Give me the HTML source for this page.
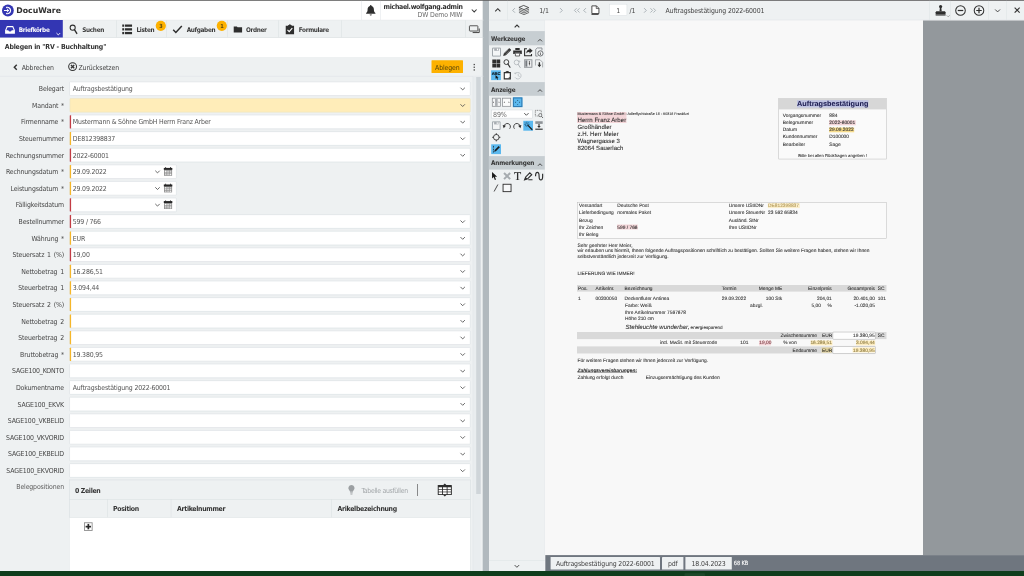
<!DOCTYPE html>
<html lang="de"><head><meta charset="utf-8"><title>DocuWare - Ablegen in "RV - Buchhaltung"</title>
<style>
html,body{margin:0;padding:0;background:#fff;}
body{width:1024px;height:576px;overflow:hidden;position:relative;}
#app{position:absolute;left:0;top:0;width:10240px;height:5760px;transform:scale(0.1);transform-origin:0 0;font-family:'DejaVu Sans Condensed','Liberation Sans',sans-serif;overflow:hidden;text-rendering:geometricPrecision;will-change:transform;}
#app div,#app span,#app svg,#app label,#app h1,#app b,#app i,#app u{position:absolute;box-sizing:border-box;margin:0;padding:0;}
#app .t{white-space:nowrap;letter-spacing:-1.6px;font-style:normal;font-weight:400;text-decoration:none}
#app svg{overflow:visible}
</style></head>
<body><div id="app">
<div style="left:0px;top:0px;width:10240px;height:5760px;background:#fff;"></div>
<div style="left:0px;top:200px;width:4835px;height:175px;background:#eef1f2;"></div>
<div style="left:0px;top:570px;width:4835px;height:5140px;background:#eef1f2;"></div>
<div style="left:4887.5px;top:0px;width:5352.5px;height:200px;background:#eef1f2;"></div>
<div style="left:4887.5px;top:200px;width:560px;height:5510px;background:#eef1f2;"></div>
<div style="left:5447.5px;top:203px;width:3782.5px;height:5349px;background:#f8f8f8;"></div>
<div style="left:9230px;top:203px;width:1010px;height:5349px;background:#93989c;"></div>
<div style="left:5452.5px;top:5551px;width:4787.5px;height:159px;background:#6f767f;"></div>
<div style="left:4827px;top:0px;width:63px;height:5710px;background:#b1b9be;"></div>
<div style="left:0px;top:0px;width:10240px;height:8px;background:#5e5e5e;"></div>
<div style="left:0px;top:5710px;width:10240px;height:50px;background:#0f3d1c;"></div>
<svg style="left:20px;top:46px;width:118px;height:118px;" viewBox="0 0 24 24"><circle cx="12" cy="12" r="12" fill="#3336b3"/><path d="M9.2 5.6 A6.6 6.6 0 1 1 9.2 18.4" fill="none" stroke="#fff" stroke-width="2.3" stroke-linecap="round"/><path d="M4.8 12 H13.2 M10.4 8.9 L13.6 12 L10.4 15.1" fill="none" stroke="#fff" stroke-width="2" stroke-linecap="round" stroke-linejoin="round"/></svg>
<span class="t" style="top:67px;font-size:78px;line-height:78px;color:#2f2f2f;font-weight:700;font-family:'DejaVu Sans','Liberation Sans',sans-serif;letter-spacing:0px;left:162px;">DocuWare</span>
<div style="left:3615px;top:8px;width:5px;height:192px;background:#dfe3e6;"></div>
<div style="left:3802.5px;top:8px;width:5px;height:192px;background:#dfe3e6;"></div>
<svg style="left:3655px;top:43px;width:105px;height:120px;" viewBox="0 0 21 24"><path d="M10.5 1.2c-.9 0-1.6.7-1.6 1.6v.7C5.9 4.4 4.2 7 4.2 10.2c0 4.3-1.3 5.9-3 7.4v1.2h18.6v-1.2c-1.7-1.5-3-3.1-3-7.4 0-3.2-1.7-5.8-4.7-6.7v-.7c0-.9-.7-1.6-1.6-1.6z" fill="#2e2e2e"/><path d="M8.3 20.2a2.2 2.2 0 0 0 4.4 0z" fill="#2e2e2e"/></svg>
<span class="t" style="top:31.4px;font-size:69.3px;line-height:69.3px;color:#2f2f2f;font-weight:700;letter-spacing:-3.3px;right:5614px;">michael.wolfgang.admin</span>
<span class="t" style="top:111.4px;font-size:69.3px;line-height:69.3px;color:#6a6a6a;right:5614px;">DW Demo MIW</span>
<svg style="left:4712px;top:90px;width:60px;height:34px;" viewBox="0 0 12 7"><path d="M1 1 L6 6 L11 1" fill="none" stroke="#3a3a3a" stroke-width="2.1"/></svg>
<div style="left:0px;top:198px;width:4835px;height:5px;background:#e3e7e9;"></div>
<div style="left:0px;top:373px;width:4835px;height:5px;background:#d3d8db;"></div>
<div style="left:0px;top:200px;width:628px;height:175px;background:#3336b3;"></div>
<svg style="left:48px;top:256px;width:104px;height:86px;" viewBox="0 0 21 17"><path d="M4.2 0.8 H16.8 L20.4 9.2 V16.2 H0.6 V9.2 Z" fill="#fff"/><path d="M5.5 2.9 H15.5 L18 9.2 H14 A3.6 3.6 0 0 1 7 9.2 H3 Z" fill="#3336b3"/></svg>
<span class="t" style="top:267.9px;font-size:64px;line-height:64px;color:#fff;font-weight:700;letter-spacing:-3.3px;left:187px;">Briefkörbe</span>
<svg style="left:560px;top:326px;width:46px;height:28px;" viewBox="0 0 10 6"><path d="M1 1 L5 5 L9 1" fill="none" stroke="#fff" stroke-width="2"/></svg>
<div style="left:1165px;top:203px;width:5px;height:170px;background:#d9dee1;"></div>
<div style="left:1662.5px;top:203px;width:5px;height:170px;background:#d9dee1;"></div>
<div style="left:2272.5px;top:203px;width:5px;height:170px;background:#d9dee1;"></div>
<div style="left:2782.5px;top:203px;width:5px;height:170px;background:#d9dee1;"></div>
<div style="left:3412.5px;top:203px;width:5px;height:170px;background:#d9dee1;"></div>
<div style="left:4652.5px;top:203px;width:5px;height:170px;background:#d9dee1;"></div>
<svg style="left:693px;top:242px;width:82px;height:102px;" viewBox="0 0 16 20"><circle cx="6.6" cy="6.8" r="5" fill="none" stroke="#2e2e2e" stroke-width="2"/><path d="M10 10.8 L14.6 18.2" stroke="#2e2e2e" stroke-width="2.7" stroke-linecap="round"/></svg>
<span class="t" style="top:267.9px;font-size:64px;line-height:64px;color:#3a3a3a;font-weight:700;letter-spacing:-3.3px;left:822px;">Suchen</span>
<svg style="left:1222px;top:245px;width:99px;height:98px;" viewBox="0 0 20 20"><g fill="#2e2e2e"><rect x="0" y="0" width="4" height="4.6"/><rect x="5.6" y="0" width="14.4" height="4.6"/><rect x="0" y="7.6" width="4" height="4.6"/><rect x="5.6" y="7.6" width="14.4" height="4.6"/><rect x="0" y="15.2" width="4" height="4.6"/><rect x="5.6" y="15.2" width="14.4" height="4.6"/></g></svg>
<span class="t" style="top:267.9px;font-size:64px;line-height:64px;color:#3a3a3a;font-weight:700;letter-spacing:-3.3px;left:1364px;">Listen</span>
<div style="left:1557px;top:207px;width:102px;height:102px;background:#fdb100;border-radius:50%"></div>
<span class="t" style="top:232.6px;font-size:56px;line-height:56px;color:#5e4a0c;font-weight:700;left:608px;width:2000px;text-align:center;">3</span>
<svg style="left:1726px;top:252px;width:98px;height:84px;" viewBox="0 0 20 17"><path d="M1.2 9.4 L6.6 14.8 L18.8 1.4" fill="none" stroke="#2e2e2e" stroke-width="3"/></svg>
<span class="t" style="top:267.9px;font-size:64px;line-height:64px;color:#3a3a3a;font-weight:700;letter-spacing:-3.3px;left:1867px;">Aufgaben</span>
<div style="left:2167px;top:207px;width:102px;height:102px;background:#fdb100;border-radius:50%"></div>
<span class="t" style="top:232.6px;font-size:56px;line-height:56px;color:#5e4a0c;font-weight:700;left:1218px;width:2000px;text-align:center;">1</span>
<svg style="left:2337px;top:260px;width:84px;height:64px;" viewBox="0 0 17 13"><path d="M0 1 H6.4 L7.8 2.6 H17 V13 H0 Z" fill="#2e2e2e"/></svg>
<span class="t" style="top:267.9px;font-size:64px;line-height:64px;color:#3a3a3a;font-weight:700;letter-spacing:-3.3px;left:2459px;">Ordner</span>
<svg style="left:2857px;top:244px;width:84px;height:98px;" viewBox="0 0 17 20"><path d="M0 2.6 H5 V1 H6.6 A2 2 0 0 1 10.4 1 H12 V2.6 H17 V20 H0 Z" fill="#2e2e2e"/><path d="M3.6 11.4 L7 14.8 L13.4 7.4" fill="none" stroke="#fff" stroke-width="2.2"/></svg>
<span class="t" style="top:267.9px;font-size:64px;line-height:64px;color:#3a3a3a;font-weight:700;letter-spacing:-3.3px;left:2987px;">Formulare</span>
<svg style="left:4690px;top:253px;width:114px;height:80px;" viewBox="0 0 23 16"><rect x="0.9" y="0.9" width="17" height="10.6" rx="1" fill="none" stroke="#444" stroke-width="1.8"/><path d="M20.6 6.4 V14.6 H7.4" fill="none" stroke="#444" stroke-width="2"/></svg>
<h1 class="t" style="left:48px;top:437.4px;font-size:69.3px;line-height:69.3px;color:#333;font-weight:700;letter-spacing:-2px">Ablegen in "RV - Buchhaltung"</h1>
<div style="left:0px;top:759px;width:4835px;height:5px;background:#dde2e5;"></div>
<svg style="left:135px;top:642px;width:38px;height:60px;" viewBox="0 0 7 11"><path d="M6 1 L1.5 5.5 L6 10" fill="none" stroke="#333" stroke-width="2.6"/></svg>
<span class="t" style="top:639.4px;font-size:69.3px;line-height:69.3px;color:#444;left:217px;">Abbrechen</span>
<svg style="left:680px;top:620px;width:92px;height:92px;" viewBox="0 0 18 18"><circle cx="9" cy="9" r="7.7" fill="none" stroke="#333" stroke-width="2"/><path d="M5.8 5.8 L12.2 12.2 M12.2 5.8 L5.8 12.2" stroke="#333" stroke-width="2.6"/></svg>
<span class="t" style="top:639.4px;font-size:69.3px;line-height:69.3px;color:#444;left:785px;">Zurücksetzen</span>
<div style="left:4315px;top:602.5px;width:315px;height:127.5px;background:#fdb100;border-radius:5px"></div>
<span class="t" style="top:639.4px;font-size:69.3px;line-height:69.3px;color:#5a4608;left:3472.5px;width:2000px;text-align:center;">Ablegen</span>
<div style="left:4736px;top:639px;width:13px;height:13px;background:#444;"></div>
<div style="left:4736px;top:666px;width:13px;height:13px;background:#444;"></div>
<div style="left:4736px;top:693px;width:13px;height:13px;background:#444;"></div>
<label class="t" style="right:9600px;top:855.4px;font-size:69.3px;line-height:69.3px;color:#454545;word-spacing:10px">Belegart</label>
<div style="left:693px;top:815.5px;width:4012px;height:142px;background:#fff;border:5.5px solid #d5dbdf;border-radius:9px"></div>
<span class="t" style="top:855.4px;font-size:69.3px;line-height:69.3px;color:#555;letter-spacing:-2px;left:728px;">Auftragsbestätigung</span>
<svg style="left:4600px;top:871.5px;width:54px;height:32px;" viewBox="0 0 11 6.5"><path d="M1 1 L5.5 5.5 L10 1" fill="none" stroke="#4c4c4c" stroke-width="1.7"/></svg>
<label class="t" style="right:9600px;top:1021.4px;font-size:69.3px;line-height:69.3px;color:#454545;word-spacing:10px">Mandant *</label>
<div style="left:697px;top:981.5px;width:4008px;height:142px;background:#ffedb9;border:5.5px solid #e9e0c0;border-radius:9px"></div>
<svg style="left:4600px;top:1037.5px;width:54px;height:32px;" viewBox="0 0 11 6.5"><path d="M1 1 L5.5 5.5 L10 1" fill="none" stroke="#4c4c4c" stroke-width="1.7"/></svg>
<label class="t" style="right:9600px;top:1187.4px;font-size:69.3px;line-height:69.3px;color:#454545;word-spacing:10px">Firmenname *</label>
<div style="left:697px;top:1147.5px;width:4008px;height:142px;background:#fff;border:5.5px solid #d5dbdf;border-radius:9px"></div>
<div style="left:698px;top:1152.5px;width:12.5px;height:132px;background:#c33c44;border-radius:5px 0 0 5px"></div>
<span class="t" style="top:1187.4px;font-size:69.3px;line-height:69.3px;color:#555;letter-spacing:-2px;left:728px;">Mustermann &amp; Söhne GmbH Herrn Franz Arber</span>
<svg style="left:4600px;top:1203.5px;width:54px;height:32px;" viewBox="0 0 11 6.5"><path d="M1 1 L5.5 5.5 L10 1" fill="none" stroke="#4c4c4c" stroke-width="1.7"/></svg>
<label class="t" style="right:9600px;top:1353.4px;font-size:69.3px;line-height:69.3px;color:#454545;word-spacing:10px">Steuernummer</label>
<div style="left:697px;top:1313.5px;width:4008px;height:142px;background:#fff;border:5.5px solid #d5dbdf;border-radius:9px"></div>
<div style="left:698px;top:1318.5px;width:12.5px;height:132px;background:#f5b62a;border-radius:5px 0 0 5px"></div>
<span class="t" style="top:1353.4px;font-size:69.3px;line-height:69.3px;color:#555;letter-spacing:-2px;left:728px;">DE812398837</span>
<svg style="left:4600px;top:1369.5px;width:54px;height:32px;" viewBox="0 0 11 6.5"><path d="M1 1 L5.5 5.5 L10 1" fill="none" stroke="#4c4c4c" stroke-width="1.7"/></svg>
<label class="t" style="right:9600px;top:1519.4px;font-size:69.3px;line-height:69.3px;color:#454545;word-spacing:10px">Rechnungsnummer</label>
<div style="left:697px;top:1479.5px;width:4008px;height:142px;background:#fff;border:5.5px solid #d5dbdf;border-radius:9px"></div>
<div style="left:698px;top:1484.5px;width:12.5px;height:132px;background:#c33c44;border-radius:5px 0 0 5px"></div>
<span class="t" style="top:1519.4px;font-size:69.3px;line-height:69.3px;color:#555;letter-spacing:-2px;left:728px;">2022-60001</span>
<svg style="left:4600px;top:1535.5px;width:54px;height:32px;" viewBox="0 0 11 6.5"><path d="M1 1 L5.5 5.5 L10 1" fill="none" stroke="#4c4c4c" stroke-width="1.7"/></svg>
<label class="t" style="right:9600px;top:1685.4px;font-size:69.3px;line-height:69.3px;color:#454545;word-spacing:10px">Rechnungsdatum *</label>
<div style="left:697px;top:1645.5px;width:1069px;height:142px;background:#fff;border:5.5px solid #d5dbdf;border-radius:9px"></div>
<div style="left:698px;top:1650.5px;width:12.5px;height:132px;background:#f5b62a;border-radius:5px 0 0 5px"></div>
<span class="t" style="top:1685.4px;font-size:69.3px;line-height:69.3px;color:#555;letter-spacing:-2px;left:728px;">29.09.2022</span>
<svg style="left:1548px;top:1701.5px;width:54px;height:32px;" viewBox="0 0 11 6.5"><path d="M1 1 L5.5 5.5 L10 1" fill="none" stroke="#4c4c4c" stroke-width="1.7"/></svg>
<svg style="left:1638px;top:1671.5px;width:85px;height:88px;" viewBox="0 0 17 17.6"><path d="M0.4 2 H16.6 V17.2 H0.4 Z" fill="#8c8c8c"/><path d="M0 1.4 H17 V5.2 H0 Z" fill="#262626"/><path d="M2.6 0 H4.6 V2 H2.6 Z M12.4 0 H14.4 V2 H12.4 Z" fill="#262626"/><g fill="#dcdcdc"><rect x="2" y="6.8" width="3.4" height="2.6" fill="#fff"/><rect x="6.8" y="6.8" width="3.4" height="2.6"/><rect x="11.6" y="6.8" width="3.4" height="2.6"/><rect x="2" y="10.4" width="3.4" height="2.4"/><rect x="6.8" y="10.4" width="3.4" height="2.4"/><rect x="11.6" y="10.4" width="3.4" height="2.4"/><rect x="2" y="13.8" width="3.4" height="2.2"/><rect x="6.8" y="13.8" width="3.4" height="2.2"/><rect x="11.6" y="13.8" width="3.4" height="2.2" fill="#fff"/></g></svg>
<label class="t" style="right:9600px;top:1851.4px;font-size:69.3px;line-height:69.3px;color:#454545;word-spacing:10px">Leistungsdatum *</label>
<div style="left:697px;top:1811.5px;width:1069px;height:142px;background:#fff;border:5.5px solid #d5dbdf;border-radius:9px"></div>
<div style="left:698px;top:1816.5px;width:12.5px;height:132px;background:#f5b62a;border-radius:5px 0 0 5px"></div>
<span class="t" style="top:1851.4px;font-size:69.3px;line-height:69.3px;color:#555;letter-spacing:-2px;left:728px;">29.09.2022</span>
<svg style="left:1548px;top:1867.5px;width:54px;height:32px;" viewBox="0 0 11 6.5"><path d="M1 1 L5.5 5.5 L10 1" fill="none" stroke="#4c4c4c" stroke-width="1.7"/></svg>
<svg style="left:1638px;top:1837.5px;width:85px;height:88px;" viewBox="0 0 17 17.6"><path d="M0.4 2 H16.6 V17.2 H0.4 Z" fill="#8c8c8c"/><path d="M0 1.4 H17 V5.2 H0 Z" fill="#262626"/><path d="M2.6 0 H4.6 V2 H2.6 Z M12.4 0 H14.4 V2 H12.4 Z" fill="#262626"/><g fill="#dcdcdc"><rect x="2" y="6.8" width="3.4" height="2.6" fill="#fff"/><rect x="6.8" y="6.8" width="3.4" height="2.6"/><rect x="11.6" y="6.8" width="3.4" height="2.6"/><rect x="2" y="10.4" width="3.4" height="2.4"/><rect x="6.8" y="10.4" width="3.4" height="2.4"/><rect x="11.6" y="10.4" width="3.4" height="2.4"/><rect x="2" y="13.8" width="3.4" height="2.2"/><rect x="6.8" y="13.8" width="3.4" height="2.2"/><rect x="11.6" y="13.8" width="3.4" height="2.2" fill="#fff"/></g></svg>
<label class="t" style="right:9600px;top:2017.4px;font-size:69.3px;line-height:69.3px;color:#454545;word-spacing:10px">Fälligkeitsdatum</label>
<div style="left:697px;top:1977.5px;width:1069px;height:142px;background:#fff;border:5.5px solid #d5dbdf;border-radius:9px"></div>
<div style="left:698px;top:1982.5px;width:12.5px;height:132px;background:#c33c44;border-radius:5px 0 0 5px"></div>
<svg style="left:1548px;top:2033.5px;width:54px;height:32px;" viewBox="0 0 11 6.5"><path d="M1 1 L5.5 5.5 L10 1" fill="none" stroke="#4c4c4c" stroke-width="1.7"/></svg>
<svg style="left:1638px;top:2003.5px;width:85px;height:88px;" viewBox="0 0 17 17.6"><path d="M0.4 2 H16.6 V17.2 H0.4 Z" fill="#8c8c8c"/><path d="M0 1.4 H17 V5.2 H0 Z" fill="#262626"/><path d="M2.6 0 H4.6 V2 H2.6 Z M12.4 0 H14.4 V2 H12.4 Z" fill="#262626"/><g fill="#dcdcdc"><rect x="2" y="6.8" width="3.4" height="2.6" fill="#fff"/><rect x="6.8" y="6.8" width="3.4" height="2.6"/><rect x="11.6" y="6.8" width="3.4" height="2.6"/><rect x="2" y="10.4" width="3.4" height="2.4"/><rect x="6.8" y="10.4" width="3.4" height="2.4"/><rect x="11.6" y="10.4" width="3.4" height="2.4"/><rect x="2" y="13.8" width="3.4" height="2.2"/><rect x="6.8" y="13.8" width="3.4" height="2.2"/><rect x="11.6" y="13.8" width="3.4" height="2.2" fill="#fff"/></g></svg>
<label class="t" style="right:9600px;top:2183.4px;font-size:69.3px;line-height:69.3px;color:#454545;word-spacing:10px">Bestellnummer</label>
<div style="left:697px;top:2143.5px;width:4008px;height:142px;background:#fff;border:5.5px solid #d5dbdf;border-radius:9px"></div>
<div style="left:698px;top:2148.5px;width:12.5px;height:132px;background:#c33c44;border-radius:5px 0 0 5px"></div>
<span class="t" style="top:2183.4px;font-size:69.3px;line-height:69.3px;color:#555;letter-spacing:-2px;left:728px;">599 / 766</span>
<svg style="left:4600px;top:2199.5px;width:54px;height:32px;" viewBox="0 0 11 6.5"><path d="M1 1 L5.5 5.5 L10 1" fill="none" stroke="#4c4c4c" stroke-width="1.7"/></svg>
<label class="t" style="right:9600px;top:2349.4px;font-size:69.3px;line-height:69.3px;color:#454545;word-spacing:10px">Währung *</label>
<div style="left:697px;top:2309.5px;width:4008px;height:142px;background:#fff;border:5.5px solid #d5dbdf;border-radius:9px"></div>
<div style="left:698px;top:2314.5px;width:12.5px;height:132px;background:#f5b62a;border-radius:5px 0 0 5px"></div>
<span class="t" style="top:2349.4px;font-size:69.3px;line-height:69.3px;color:#555;letter-spacing:-2px;left:728px;">EUR</span>
<svg style="left:4600px;top:2365.5px;width:54px;height:32px;" viewBox="0 0 11 6.5"><path d="M1 1 L5.5 5.5 L10 1" fill="none" stroke="#4c4c4c" stroke-width="1.7"/></svg>
<label class="t" style="right:9600px;top:2515.4px;font-size:69.3px;line-height:69.3px;color:#454545;word-spacing:10px">Steuersatz 1 (%)</label>
<div style="left:697px;top:2475.5px;width:4008px;height:142px;background:#fff;border:5.5px solid #d5dbdf;border-radius:9px"></div>
<div style="left:698px;top:2480.5px;width:12.5px;height:132px;background:#c33c44;border-radius:5px 0 0 5px"></div>
<span class="t" style="top:2515.4px;font-size:69.3px;line-height:69.3px;color:#555;letter-spacing:-2px;left:728px;">19,00</span>
<svg style="left:4600px;top:2531.5px;width:54px;height:32px;" viewBox="0 0 11 6.5"><path d="M1 1 L5.5 5.5 L10 1" fill="none" stroke="#4c4c4c" stroke-width="1.7"/></svg>
<label class="t" style="right:9600px;top:2681.4px;font-size:69.3px;line-height:69.3px;color:#454545;word-spacing:10px">Nettobetrag 1</label>
<div style="left:697px;top:2641.5px;width:4008px;height:142px;background:#fff;border:5.5px solid #d5dbdf;border-radius:9px"></div>
<div style="left:698px;top:2646.5px;width:12.5px;height:132px;background:#f5b62a;border-radius:5px 0 0 5px"></div>
<span class="t" style="top:2681.4px;font-size:69.3px;line-height:69.3px;color:#555;letter-spacing:-2px;left:728px;">16.286,51</span>
<svg style="left:4600px;top:2697.5px;width:54px;height:32px;" viewBox="0 0 11 6.5"><path d="M1 1 L5.5 5.5 L10 1" fill="none" stroke="#4c4c4c" stroke-width="1.7"/></svg>
<label class="t" style="right:9600px;top:2847.4px;font-size:69.3px;line-height:69.3px;color:#454545;word-spacing:10px">Steuerbetrag 1</label>
<div style="left:697px;top:2807.5px;width:4008px;height:142px;background:#fff;border:5.5px solid #d5dbdf;border-radius:9px"></div>
<div style="left:698px;top:2812.5px;width:12.5px;height:132px;background:#f5b62a;border-radius:5px 0 0 5px"></div>
<span class="t" style="top:2847.4px;font-size:69.3px;line-height:69.3px;color:#555;letter-spacing:-2px;left:728px;">3.094,44</span>
<svg style="left:4600px;top:2863.5px;width:54px;height:32px;" viewBox="0 0 11 6.5"><path d="M1 1 L5.5 5.5 L10 1" fill="none" stroke="#4c4c4c" stroke-width="1.7"/></svg>
<label class="t" style="right:9600px;top:3013.4px;font-size:69.3px;line-height:69.3px;color:#454545;word-spacing:10px">Steuersatz 2 (%)</label>
<div style="left:697px;top:2973.5px;width:4008px;height:142px;background:#fff;border:5.5px solid #d5dbdf;border-radius:9px"></div>
<div style="left:698px;top:2978.5px;width:12.5px;height:132px;background:#f5b62a;border-radius:5px 0 0 5px"></div>
<svg style="left:4600px;top:3029.5px;width:54px;height:32px;" viewBox="0 0 11 6.5"><path d="M1 1 L5.5 5.5 L10 1" fill="none" stroke="#4c4c4c" stroke-width="1.7"/></svg>
<label class="t" style="right:9600px;top:3179.4px;font-size:69.3px;line-height:69.3px;color:#454545;word-spacing:10px">Nettobetrag 2</label>
<div style="left:697px;top:3139.5px;width:4008px;height:142px;background:#fff;border:5.5px solid #d5dbdf;border-radius:9px"></div>
<div style="left:698px;top:3144.5px;width:12.5px;height:132px;background:#f5b62a;border-radius:5px 0 0 5px"></div>
<svg style="left:4600px;top:3195.5px;width:54px;height:32px;" viewBox="0 0 11 6.5"><path d="M1 1 L5.5 5.5 L10 1" fill="none" stroke="#4c4c4c" stroke-width="1.7"/></svg>
<label class="t" style="right:9600px;top:3345.4px;font-size:69.3px;line-height:69.3px;color:#454545;word-spacing:10px">Steuerbetrag 2</label>
<div style="left:697px;top:3305.5px;width:4008px;height:142px;background:#fff;border:5.5px solid #d5dbdf;border-radius:9px"></div>
<div style="left:698px;top:3310.5px;width:12.5px;height:132px;background:#f5b62a;border-radius:5px 0 0 5px"></div>
<svg style="left:4600px;top:3361.5px;width:54px;height:32px;" viewBox="0 0 11 6.5"><path d="M1 1 L5.5 5.5 L10 1" fill="none" stroke="#4c4c4c" stroke-width="1.7"/></svg>
<label class="t" style="right:9600px;top:3511.4px;font-size:69.3px;line-height:69.3px;color:#454545;word-spacing:10px">Bruttobetrag *</label>
<div style="left:697px;top:3471.5px;width:4008px;height:142px;background:#fff;border:5.5px solid #d5dbdf;border-radius:9px"></div>
<div style="left:698px;top:3476.5px;width:12.5px;height:132px;background:#f5b62a;border-radius:5px 0 0 5px"></div>
<span class="t" style="top:3511.4px;font-size:69.3px;line-height:69.3px;color:#555;letter-spacing:-2px;left:728px;">19.380,95</span>
<svg style="left:4600px;top:3527.5px;width:54px;height:32px;" viewBox="0 0 11 6.5"><path d="M1 1 L5.5 5.5 L10 1" fill="none" stroke="#4c4c4c" stroke-width="1.7"/></svg>
<label class="t" style="right:9600px;top:3677.4px;font-size:69.3px;line-height:69.3px;color:#454545;word-spacing:10px">SAGE100_KONTO</label>
<div style="left:693px;top:3637.5px;width:4012px;height:142px;background:#fff;border:5.5px solid #d5dbdf;border-radius:9px"></div>
<svg style="left:4600px;top:3693.5px;width:54px;height:32px;" viewBox="0 0 11 6.5"><path d="M1 1 L5.5 5.5 L10 1" fill="none" stroke="#4c4c4c" stroke-width="1.7"/></svg>
<label class="t" style="right:9600px;top:3843.4px;font-size:69.3px;line-height:69.3px;color:#454545;word-spacing:10px">Dokumentname</label>
<div style="left:693px;top:3803.5px;width:4012px;height:142px;background:#fff;border:5.5px solid #d5dbdf;border-radius:9px"></div>
<span class="t" style="top:3843.4px;font-size:69.3px;line-height:69.3px;color:#555;letter-spacing:-2px;left:728px;">Auftragsbestätigung 2022-60001</span>
<svg style="left:4600px;top:3859.5px;width:54px;height:32px;" viewBox="0 0 11 6.5"><path d="M1 1 L5.5 5.5 L10 1" fill="none" stroke="#4c4c4c" stroke-width="1.7"/></svg>
<label class="t" style="right:9600px;top:4009.4px;font-size:69.3px;line-height:69.3px;color:#454545;word-spacing:10px">SAGE100_EKVK</label>
<div style="left:693px;top:3969.5px;width:4012px;height:142px;background:#fff;border:5.5px solid #d5dbdf;border-radius:9px"></div>
<svg style="left:4600px;top:4025.5px;width:54px;height:32px;" viewBox="0 0 11 6.5"><path d="M1 1 L5.5 5.5 L10 1" fill="none" stroke="#4c4c4c" stroke-width="1.7"/></svg>
<label class="t" style="right:9600px;top:4175.4px;font-size:69.3px;line-height:69.3px;color:#454545;word-spacing:10px">SAGE100_VKBELID</label>
<div style="left:693px;top:4135.5px;width:4012px;height:142px;background:#fff;border:5.5px solid #d5dbdf;border-radius:9px"></div>
<svg style="left:4600px;top:4191.5px;width:54px;height:32px;" viewBox="0 0 11 6.5"><path d="M1 1 L5.5 5.5 L10 1" fill="none" stroke="#4c4c4c" stroke-width="1.7"/></svg>
<label class="t" style="right:9600px;top:4341.4px;font-size:69.3px;line-height:69.3px;color:#454545;word-spacing:10px">SAGE100_VKVORID</label>
<div style="left:693px;top:4301.5px;width:4012px;height:142px;background:#fff;border:5.5px solid #d5dbdf;border-radius:9px"></div>
<svg style="left:4600px;top:4357.5px;width:54px;height:32px;" viewBox="0 0 11 6.5"><path d="M1 1 L5.5 5.5 L10 1" fill="none" stroke="#4c4c4c" stroke-width="1.7"/></svg>
<label class="t" style="right:9600px;top:4507.4px;font-size:69.3px;line-height:69.3px;color:#454545;word-spacing:10px">SAGE100_EKBELID</label>
<div style="left:693px;top:4467.5px;width:4012px;height:142px;background:#fff;border:5.5px solid #d5dbdf;border-radius:9px"></div>
<svg style="left:4600px;top:4523.5px;width:54px;height:32px;" viewBox="0 0 11 6.5"><path d="M1 1 L5.5 5.5 L10 1" fill="none" stroke="#4c4c4c" stroke-width="1.7"/></svg>
<label class="t" style="right:9600px;top:4673.4px;font-size:69.3px;line-height:69.3px;color:#454545;word-spacing:10px">SAGE100_EKVORID</label>
<div style="left:693px;top:4633.5px;width:4012px;height:142px;background:#fff;border:5.5px solid #d5dbdf;border-radius:9px"></div>
<svg style="left:4600px;top:4689.5px;width:54px;height:32px;" viewBox="0 0 11 6.5"><path d="M1 1 L5.5 5.5 L10 1" fill="none" stroke="#4c4c4c" stroke-width="1.7"/></svg>
<span class="t" style="top:4836.4px;font-size:69.3px;line-height:69.3px;color:#5c5c5c;right:9600px;">Belegpositionen</span>
<div style="left:693px;top:4797px;width:4012px;height:913px;background:#eef1f2;border:5.5px solid #d5dbdf;border-bottom:none"></div>
<div style="left:696px;top:5174px;width:4006px;height:536px;background:#fff;"></div>
<div style="left:693px;top:4990px;width:4012px;height:5px;background:#d9dee1;"></div>
<div style="left:693px;top:5171px;width:4012px;height:5px;background:#d9dee1;"></div>
<div style="left:1070px;top:4992px;width:5px;height:180px;background:#d9dee1;"></div>
<div style="left:1707.5px;top:4992px;width:5px;height:180px;background:#d9dee1;"></div>
<div style="left:3312.5px;top:4992px;width:5px;height:180px;background:#d9dee1;"></div>
<span class="t" style="top:4874.4px;font-size:69.3px;line-height:69.3px;color:#383838;font-weight:700;letter-spacing:-3.3px;left:749px;">0 Zeilen</span>
<span class="t" style="top:5051.4px;font-size:69.3px;line-height:69.3px;color:#333;font-weight:700;letter-spacing:-3.3px;left:1130px;">Position</span>
<span class="t" style="top:5051.4px;font-size:69.3px;line-height:69.3px;color:#333;font-weight:700;letter-spacing:-3.3px;left:1770px;">Artikelnummer</span>
<span class="t" style="top:5051.4px;font-size:69.3px;line-height:69.3px;color:#333;font-weight:700;letter-spacing:-3.3px;left:3375px;">Arikelbezeichnung</span>
<div style="left:840px;top:5223px;width:86px;height:86px;background:#fff;border:9px solid #8f8f8f"></div>
<div style="left:856px;top:5257.5px;width:54px;height:17px;background:#2a2a2a;"></div>
<div style="left:874.5px;top:5239px;width:17px;height:54px;background:#2a2a2a;"></div>
<svg style="left:3480px;top:4848px;width:69px;height:104px;" viewBox="0 0 13 20"><path d="M6.5 0.5 A6 6 0 0 0 2.6 11 C3.4 11.8 3.8 12.6 3.8 13.6 H9.2 C9.2 12.6 9.6 11.8 10.4 11 A6 6 0 0 0 6.5 0.5 Z" fill="#9b9fa2"/><rect x="4" y="14.6" width="5" height="1.6" fill="#9b9fa2"/><rect x="4.6" y="17" width="3.8" height="1.6" fill="#9b9fa2"/></svg>
<span class="t" style="top:4873.4px;font-size:69.3px;line-height:69.3px;color:#a3a7aa;letter-spacing:-3.3px;left:3615px;">Tabelle ausfüllen</span>
<div style="left:4173px;top:4840px;width:6px;height:120px;background:#444;"></div>
<svg style="left:4375px;top:4834px;width:146px;height:132px;" viewBox="0 0 29 26"><path d="M14.5 0 L17.6 3 H11.4 Z M14.5 26 L17.6 23 H11.4 Z" fill="#2e2e2e"/><rect x="0.5" y="3" width="28" height="20" rx="1.2" fill="#2e2e2e"/><g fill="#fff"><rect x="2.4" y="7.6" width="6.6" height="3.6"/><rect x="10.8" y="7.6" width="7.4" height="3.6"/><rect x="20" y="7.6" width="6.6" height="3.6"/><rect x="2.4" y="12.6" width="6.6" height="3.6"/><rect x="10.8" y="12.6" width="7.4" height="3.6"/><rect x="20" y="12.6" width="6.6" height="3.6"/><rect x="2.4" y="17.6" width="6.6" height="3.6"/><rect x="10.8" y="17.6" width="7.4" height="3.6"/><rect x="20" y="17.6" width="6.6" height="3.6"/></g></svg>
<div style="left:4730px;top:764px;width:78px;height:4946px;background:#e9edef;"></div>
<div style="left:4727px;top:764px;width:5px;height:4946px;background:#dfe4e7;"></div>
<div style="left:4762px;top:770px;width:45px;height:4170px;background:#cfd5d9;"></div>
<div style="left:4887.5px;top:198px;width:5352.5px;height:5px;background:#dde2e5;"></div>
<div style="left:5070px;top:8px;width:5px;height:190px;background:#dde2e5;"></div>
<div style="left:9292.5px;top:8px;width:5px;height:190px;background:#dde2e5;"></div>
<div style="left:9500px;top:8px;width:5px;height:190px;background:#dde2e5;"></div>
<div style="left:9882.5px;top:8px;width:5px;height:190px;background:#dde2e5;"></div>
<div style="left:10065px;top:8px;width:5px;height:190px;background:#dde2e5;"></div>
<svg style="left:4947px;top:82px;width:62px;height:36px;" viewBox="0 0 12 7"><path d="M1 6 L6 1 L11 6" fill="none" stroke="#333" stroke-width="2.0"/></svg>
<svg style="left:5122px;top:76px;width:32px;height:56px;" viewBox="0 0 7 12"><path d="M6 1 L1 6 L6 11" fill="none" stroke="#a4acb1" stroke-width="2.0"/></svg>
<svg style="left:5186px;top:52px;width:108px;height:98px;" viewBox="0 0 22 20"><g fill="none" stroke="#2e2e2e" stroke-width="1.35" stroke-linejoin="round" stroke-linecap="round"><path d="M11 0.8 L20.6 4.9 L11 9 L1.4 4.9 Z" stroke-width="1.6"/><path d="M1.4 8.3 L11 12.4 L20.6 8.3"/><path d="M1.4 11.7 L11 15.8 L20.6 11.7"/><path d="M1.4 15.1 L11 19.2 L20.6 15.1"/></g></svg>
<span class="t" style="top:70.4px;font-size:69.3px;line-height:69.3px;color:#444;left:5392px;">1/1</span>
<svg style="left:5596px;top:76px;width:32px;height:56px;" viewBox="0 0 7 12"><path d="M1 1 L6 6 L1 11" fill="none" stroke="#a4acb1" stroke-width="2.0"/></svg>
<svg style="left:5740px;top:76px;width:30px;height:56px;" viewBox="0 0 7 12"><path d="M6 1 L1 6 L6 11" fill="none" stroke="#a4acb1" stroke-width="2.0"/></svg>
<svg style="left:5770px;top:76px;width:30px;height:56px;" viewBox="0 0 7 12"><path d="M6 1 L1 6 L6 11" fill="none" stroke="#a4acb1" stroke-width="2.0"/></svg>
<svg style="left:5832px;top:76px;width:32px;height:56px;" viewBox="0 0 7 12"><path d="M6 1 L1 6 L6 11" fill="none" stroke="#a4acb1" stroke-width="2.0"/></svg>
<svg style="left:5907px;top:54px;width:92px;height:98px;" viewBox="0 0 18 20"><path d="M2 1 H11.4 L16.4 6 V16.6 H2 Z" fill="#fff" stroke="#2e2e2e" stroke-width="1.7"/><path d="M11 1 V6.4 H16.4" fill="none" stroke="#2e2e2e" stroke-width="1.4"/><path d="M1.2 17.4 H15.6 V19.2 H1.2 Z" fill="#2e2e2e"/></svg>
<div style="left:6092px;top:39px;width:180px;height:119px;background:#fff;border:5.5px solid #d3d9dd"></div>
<span class="t" style="top:72.9px;font-size:64px;line-height:64px;color:#444;left:5182px;width:2000px;text-align:center;">1</span>
<span class="t" style="top:70.4px;font-size:69.3px;line-height:69.3px;color:#444;letter-spacing:0px;left:6294px;">/1</span>
<svg style="left:6436px;top:76px;width:32px;height:56px;" viewBox="0 0 7 12"><path d="M1 1 L6 6 L1 11" fill="none" stroke="#a4acb1" stroke-width="2.0"/></svg>
<svg style="left:6500px;top:76px;width:30px;height:56px;" viewBox="0 0 7 12"><path d="M1 1 L6 6 L1 11" fill="none" stroke="#a4acb1" stroke-width="2.0"/></svg>
<svg style="left:6530px;top:76px;width:30px;height:56px;" viewBox="0 0 7 12"><path d="M1 1 L6 6 L1 11" fill="none" stroke="#a4acb1" stroke-width="2.0"/></svg>
<span class="t" style="top:70.4px;font-size:69.3px;line-height:69.3px;color:#444;left:6655px;">Auftragsbestätigung 2022-60001</span>
<svg style="left:9350px;top:48px;width:112px;height:114px;" viewBox="0 0 22 23"><circle cx="11" cy="3.6" r="3.2" fill="#2e2e2e"/><path d="M9.6 5 H12.4 L13.2 13 H8.8 Z" fill="#2e2e2e"/><path d="M2.4 13 H19.6 L21 15 V19 H1 V15 Z" fill="#2e2e2e"/><path d="M1 19 H21 V21.8 H1 Z" fill="#4a4a4a"/></svg>
<svg style="left:9462px;top:150px;width:40px;height:22px;" viewBox="0 0 12 7"><path d="M1 1 L6 6 L11 1" fill="none" stroke="#666" stroke-width="1.6"/></svg>
<svg style="left:9549px;top:49px;width:112px;height:112px;" viewBox="0 0 22 22"><circle cx="11" cy="11" r="9.4" fill="none" stroke="#2e2e2e" stroke-width="2"/><path d="M5.6 11 H16.4" stroke="#2e2e2e" stroke-width="2.4"/></svg>
<svg style="left:9734px;top:49px;width:112px;height:112px;" viewBox="0 0 22 22"><circle cx="11" cy="11" r="9.4" fill="none" stroke="#2e2e2e" stroke-width="2"/><path d="M5.6 11 H16.4 M11 5.6 V16.4" stroke="#2e2e2e" stroke-width="2.4"/></svg>
<svg style="left:9947px;top:90px;width:58px;height:34px;" viewBox="0 0 12 7"><path d="M1 1 L6 6 L11 1" fill="none" stroke="#3a3a3a" stroke-width="1.9"/></svg>
<svg style="left:10140px;top:72px;width:63px;height:60px;" viewBox="0 0 12 12"><path d="M1 1 L11 11 M11 1 L1 11" stroke="#333" stroke-width="2.2"/></svg>
<div style="left:5506px;top:5570px;width:1094px;height:126px;background:#eef1f2;border-radius:4px"></div>
<span class="t" style="top:5600.4px;font-size:69.3px;line-height:69.3px;color:#444;left:5053px;width:2000px;text-align:center;">Auftragsbestätigung 2022-60001</span>
<div style="left:6620px;top:5570px;width:214px;height:126px;background:#eef1f2;border-radius:4px"></div>
<span class="t" style="top:5600.4px;font-size:69.3px;line-height:69.3px;color:#444;left:5727px;width:2000px;text-align:center;">pdf</span>
<div style="left:6854px;top:5570px;width:464px;height:126px;background:#eef1f2;border-radius:4px"></div>
<span class="t" style="top:5600.4px;font-size:69.3px;line-height:69.3px;color:#444;left:6086px;width:2000px;text-align:center;">18.04.2023</span>
<span class="t" style="top:5603.8px;font-size:57px;line-height:57px;color:#fff;left:7338px;-webkit-text-stroke:1px #fff;">68 KB</span>
<div style="left:6845px;top:5733px;width:205px;height:30px;background:#1c4829;border-radius:12px 12px 0 0"></div>
<div style="left:5445px;top:203px;width:5px;height:5350px;background:#e3e7e9;"></div>
<svg style="left:5142px;top:246px;width:56px;height:33px;" viewBox="0 0 12 7"><path d="M1 6 L6 1 L11 6" fill="none" stroke="#333" stroke-width="2.4"/></svg>
<div style="left:4887.5px;top:310.5px;width:560px;height:142.5px;background:#c7ced2;"></div>
<span class="t" style="top:355.9px;font-size:64px;line-height:64px;color:#333;font-weight:700;letter-spacing:-2px;left:4910px;">Werkzeuge</span>
<svg style="left:5376px;top:389px;width:48px;height:29px;" viewBox="0 0 12 7"><path d="M1 6 L6 1 L11 6" fill="none" stroke="#3a3a3a" stroke-width="2.3"/></svg>
<div style="left:4887.5px;top:820.5px;width:560px;height:137.5px;background:#c7ced2;"></div>
<span class="t" style="top:865.9px;font-size:64px;line-height:64px;color:#333;font-weight:700;letter-spacing:-2px;left:4910px;">Anzeige</span>
<svg style="left:5376px;top:891.5px;width:48px;height:29px;" viewBox="0 0 12 7"><path d="M1 6 L6 1 L11 6" fill="none" stroke="#3a3a3a" stroke-width="2.3"/></svg>
<div style="left:4887.5px;top:1560.5px;width:560px;height:135.5px;background:#c7ced2;"></div>
<span class="t" style="top:1599.9px;font-size:64px;line-height:64px;color:#333;font-weight:700;letter-spacing:-2px;left:4910px;">Anmerkungen</span>
<svg style="left:5376px;top:1632.5px;width:48px;height:29px;" viewBox="0 0 12 7"><path d="M1 6 L6 1 L11 6" fill="none" stroke="#3a3a3a" stroke-width="2.3"/></svg>
<svg style="left:4920px;top:476px;width:90px;height:90px;" viewBox="0 0 18 18"><path d="M1 1 H17 V17 H1 Z" fill="#f4f6f7" stroke="#a2a8ad" stroke-width="2"/><path d="M4.4 1.4 H13.6 V6.4 H4.4 Z" fill="#a8adb2"/><rect x="9.8" y="2" width="2.2" height="3.4" fill="#fff"/></svg>
<svg style="left:5026px;top:476px;width:90px;height:90px;" viewBox="0 0 18 18"><path d="M1.2 16.8 L2.6 11.4 L12.4 1.6 A1.4 1.4 0 0 1 14.4 1.6 L16.4 3.6 A1.4 1.4 0 0 1 16.4 5.6 L6.6 15.4 Z" fill="#2e2e2e"/><path d="M4 12 L12 4 M6 14 L14 6" stroke="#c9c9c9" stroke-width="0.8"/></svg>
<svg style="left:5130px;top:476px;width:90px;height:90px;" viewBox="0 0 18 18"><path d="M4.6 0.8 H13.4 V4.8 H4.6 Z" fill="#2e2e2e"/><path d="M0.4 5.6 H17.6 V13 H14.4 V10.2 H3.6 V13 H0.4 Z" fill="#2e2e2e"/><path d="M4.8 11.2 H13.2 V16.8 H4.8 Z" fill="#fff" stroke="#2e2e2e" stroke-width="1.4"/></svg>
<svg style="left:5238px;top:476px;width:90px;height:90px;" viewBox="0 0 18 18"><path d="M6.4 2.2 H1.6 V16.4 H15.4 V13" fill="none" stroke="#2e2e2e" stroke-width="2.2"/><path d="M17.8 6.4 L11.4 0.8 V4 C7.6 4.2 5.2 6.8 4.8 11.8 C6.6 9.4 8.6 8.6 11.4 8.6 V12 Z" fill="#2e2e2e"/></svg>
<svg style="left:5344px;top:474px;width:92px;height:94px;" viewBox="0 0 18 18"><path d="M2.6 16.8 V3.6 L5.6 0.9 H14.8 V5.6" fill="none" stroke="#80848a" stroke-width="1.7"/><path d="M2.6 16.8 H6.6" stroke="#80848a" stroke-width="1.7"/><circle cx="11.8" cy="11.6" r="5.1" fill="#f1f3f4" stroke="#6a6e72" stroke-width="1.9"/><path d="M11.8 8.8 V9.8 M11.8 11 V14.6" stroke="#4a4a4a" stroke-width="1.6"/></svg>
<svg style="left:4923px;top:591px;width:80px;height:88px;" viewBox="0 0 18 18"><g fill="#2e2e2e"><rect x="0" y="0" width="8.5" height="8.6"/><rect x="9.3" y="0" width="8.5" height="8.6"/><rect x="0" y="9.4" width="8.5" height="8.6"/><rect x="9.3" y="9.4" width="8.5" height="8.6"/></g></svg>
<svg style="left:5032px;top:590px;width:74px;height:90px;" viewBox="0 0 15 18"><circle cx="6.4" cy="6.2" r="4.9" fill="none" stroke="#2e2e2e" stroke-width="1.8"/><path d="M9.6 10 L13.8 16.6" stroke="#2e2e2e" stroke-width="2.4" stroke-linecap="round"/></svg>
<svg style="left:5134px;top:593px;width:82px;height:90px;" viewBox="0 0 16.6 18"><circle cx="6.4" cy="6.2" r="4.8" fill="none" stroke="#afb4b8" stroke-width="1.6"/><path d="M9.6 10 L13.8 16.6" stroke="#afb4b8" stroke-width="2" stroke-linecap="round"/><path d="M9 4 H13.6 L12 2.4 M13.6 4 L12 5.6" fill="none" stroke="#afb4b8" stroke-width="1.2"/></svg>
<svg style="left:5240px;top:591px;width:84px;height:89px;" viewBox="0 0 18 18"><rect x="0.8" y="0.8" width="16.4" height="16.4" fill="#c3c7ca" stroke="#8a8e92" stroke-width="1.4"/><rect x="3.2" y="2.6" width="3.4" height="12.8" fill="#777b7f"/><rect x="8.2" y="2.6" width="6.6" height="12.8" fill="#f2f3f4"/><path d="M10.4 5 H13 M11.6 5 V13 M10.4 9 H13" stroke="#2e2e2e" stroke-width="1.4" fill="none"/></svg>
<svg style="left:5348px;top:591px;width:86px;height:90px;" viewBox="0 0 18 18"><path d="M1.4 1 H11 L16.4 6.4 V17" fill="none" stroke="#8d9195" stroke-width="1.5"/><path d="M1.4 1 V13" stroke="#8d9195" stroke-width="1.4"/><path d="M8.2 6.4 H11 V11.4 H13.6 L9.6 16.8 L5.6 11.4 H8.2 Z" fill="#2e2e2e"/></svg>
<div style="left:4911px;top:703px;width:98px;height:98px;background:#5bb8ee;"></div>
<span class="t" style="top:714.3px;font-size:41px;line-height:41px;color:#0c1216;font-weight:700;font-family:'Liberation Sans',sans-serif;letter-spacing:-1.5px;left:3960px;width:2000px;text-align:center;-webkit-text-stroke:1.2px #0c1216">ABC</span>
<svg style="left:4950px;top:748px;width:44px;height:52px;" viewBox="0 0 9 11"><path d="M1 0.4 V8.6 L3 6.8 L4.6 10.4 L6.2 9.6 L4.6 6.2 H7.4 Z" fill="#111"/></svg>
<svg style="left:5032px;top:707px;width:82px;height:92px;" viewBox="0 0 16 18"><path d="M1 2.6 H5 V1.2 H6.4 A2.2 2.2 0 0 1 9.6 1.2 H11 V2.6 H15 V17 H1 Z" fill="#2e2e2e"/><path d="M3.2 5 H12.8 V14.8 H9.6 V11.6 H12.8 V14.8 L9.6 14.8 H3.2 Z" fill="#fff"/><path d="M12.8 11.6 V14.8 H9.6 Z" fill="#2e2e2e"/></svg>
<svg style="left:5136px;top:712px;width:88px;height:88px;" viewBox="0 0 18 18"><path d="M3.6 5 A6.6 6.6 0 1 1 3 12.6" fill="none" stroke="#afb4b8" stroke-width="1.4"/><path d="M0.8 3.4 L4 5.6 L5 1.8" fill="none" stroke="#afb4b8" stroke-width="1.3"/><path d="M9.4 5 V9.4 L12.4 11" fill="none" stroke="#afb4b8" stroke-width="1.3"/></svg>
<svg style="left:4919px;top:976px;width:89px;height:93px;" viewBox="0 0 18 18"><rect x="0.8" y="0.8" width="16.4" height="16.4" fill="#f4f5f6" stroke="#8a8e92" stroke-width="1.5"/><rect x="6.4" y="1.6" width="5.2" height="14.8" fill="#a9adb1"/><path d="M2.2 9 L4.2 7.6 V10.4 Z M15.8 9 L13.8 7.6 V10.4 Z" fill="#444"/></svg>
<svg style="left:5022px;top:976px;width:89px;height:93px;" viewBox="0 0 18 18"><rect x="0.8" y="0.8" width="16.4" height="16.4" fill="#fafbfb" stroke="#8a8e92" stroke-width="1.5"/><path d="M3 9 L5 7.4 V10.6 Z M15 9 L13 7.4 V10.6 Z" fill="#2e2e2e"/></svg>
<div style="left:5129px;top:974px;width:95px;height:97px;background:#5bb8ee;border:11px solid #2f7db5"></div>
<svg style="left:5144px;top:990px;width:65px;height:65px;" viewBox="0 0 12 12"><path d="M6 1.2 L7.3 3 H4.7 Z M6 10.8 L7.3 9 H4.7 Z M1.2 6 L3 4.7 V7.3 Z M10.8 6 L9 4.7 V7.3 Z" fill="#163a52"/></svg>
<div style="left:4912px;top:1097px;width:413px;height:87px;background:#fff;border:5px solid #cdd3d7"></div>
<span class="t" style="top:1106.9px;font-size:71px;line-height:71px;color:#686868;left:4930px;">89%</span>
<svg style="left:5238px;top:1127px;width:52px;height:30px;" viewBox="0 0 12 7"><path d="M1 1 L6 6 L11 1" fill="none" stroke="#444" stroke-width="2.1"/></svg>
<svg style="left:5350px;top:1100px;width:84px;height:84px;" viewBox="0 0 17 17"><rect x="0.7" y="0.7" width="12" height="11.4" fill="none" stroke="#555" stroke-width="1.3" stroke-dasharray="2 1.4"/><circle cx="10.6" cy="10.4" r="3.2" fill="#eef1f2" stroke="#555" stroke-width="1.3"/><path d="M13 12.8 L16 16" stroke="#444" stroke-width="1.8"/></svg>
<svg style="left:4920px;top:1212px;width:86px;height:89px;" viewBox="0 0 18 18"><path d="M1 1 H17 V17 H1 Z" fill="#f4f5f6" stroke="#a2a8ad" stroke-width="2"/><path d="M4.4 1.4 H13.6 V6.4 H4.4 Z" fill="#a8adb2"/><rect x="9.8" y="2" width="2.2" height="3.4" fill="#fff"/></svg>
<svg style="left:5027px;top:1216px;width:83px;height:83px;" viewBox="0 0 17 17"><path d="M2.8 10.4 A6.5 6.5 0 1 1 14.2 14.6" fill="none" stroke="#2e2e2e" stroke-width="1.8"/><path d="M0 7.2 L6.6 8.6 L2 13.8 Z" fill="#2e2e2e"/></svg>
<svg style="left:5131px;top:1216px;width:83px;height:83px;" viewBox="0 0 17 17"><path d="M14.2 10.4 A6.5 6.5 0 1 0 2.8 14.6" fill="none" stroke="#2e2e2e" stroke-width="1.8"/><path d="M17 7.2 L10.4 8.6 L15 13.8 Z" fill="#2e2e2e"/></svg>
<div style="left:5233px;top:1208px;width:97px;height:99px;background:#5bb8ee;"></div>
<svg style="left:5240px;top:1214px;width:86px;height:88px;" viewBox="0 0 17 17.6"><path d="M7.4 7.4 L15.8 16.2" stroke="#1a1a1a" stroke-width="2.4" stroke-linecap="round"/><path d="M5.6 0.6 V4.2 M5.6 7.6 V11 M0.4 5.8 H4 M7.4 5.8 H11 M1.8 2 L4.2 4.4 M9.4 2 L7 4.4 M1.8 9.6 L4.2 7.2" stroke="#1c5479" stroke-width="1.5"/></svg>
<svg style="left:5352px;top:1212px;width:76px;height:87px;" viewBox="0 0 15 17"><rect x="0.2" y="0" width="14.6" height="5.2" fill="#8f9397"/><path d="M6.4 5.6 H8.6 V9.4 H11 L7.5 13.2 L4 9.4 H6.4 Z" fill="#2e2e2e"/><rect x="0.2" y="14.6" width="14.6" height="2.2" fill="#2e2e2e"/></svg>
<svg style="left:4920px;top:1330px;width:86px;height:86px;" viewBox="0 0 17 17"><circle cx="8.5" cy="8.5" r="5.6" fill="none" stroke="#2e2e2e" stroke-width="1.7"/><path d="M8.5 0.4 V3.6 M8.5 13.4 V16.6 M0.4 8.5 H3.6 M13.4 8.5 H16.6" stroke="#2e2e2e" stroke-width="1.7"/></svg>
<div style="left:4912px;top:1443px;width:98px;height:98px;background:#5bb8ee;"></div>
<svg style="left:4922px;top:1452px;width:80px;height:80px;" viewBox="0 0 16 16"><path d="M2.6 1.4 V5 M2.6 7 V14.6" stroke="#1a1a1a" stroke-width="1.4" stroke-dasharray="3.4 1.6"/><path d="M4 13 L5 9.6 L13 1.8 L15.4 4.2 L7.4 12 Z" fill="#1a1a1a"/></svg>
<svg style="left:4915px;top:1717px;width:66px;height:88px;" viewBox="0 0 13 17.6"><path d="M1 0.6 V13.6 L4.2 10.8 L6.6 16.6 L9 15.6 L6.6 10 H11.2 Z" fill="#1a1a1a"/></svg>
<svg style="left:5032px;top:1722px;width:78px;height:78px;" viewBox="0 0 15 15"><path d="M1.6 1.6 L13.4 13.4 M13.4 1.6 L1.6 13.4" stroke="#a6abaf" stroke-width="3.8"/></svg>
<span class="t" style="top:1704.2px;font-size:118px;line-height:118px;color:#2a2a2a;font-family:'Liberation Serif',serif;left:4175px;width:2000px;text-align:center;-webkit-text-stroke:1.5px #2a2a2a;">T</span>
<svg style="left:5240px;top:1719px;width:88px;height:86px;" viewBox="0 0 17.6 17"><path d="M1.2 15.8 L3.4 10 L11.6 1.6 L15.4 5.4 L7.2 13.8 Z" fill="none" stroke="#2e2e2e" stroke-width="2.3"/><path d="M0.8 16.2 L3 10 L7.2 14.2 Z" fill="#2e2e2e"/><path d="M8.6 15.6 H17" stroke="#2e2e2e" stroke-width="2"/></svg>
<svg style="left:5350px;top:1719px;width:82px;height:86px;" viewBox="0 0 16 17"><path d="M1 8.4 C1 -1.6 8 -1.6 8 8.4 C8 18.4 15 18.4 15 8.4 V3.6" fill="none" stroke="#2e2e2e" stroke-width="2.3"/></svg>
<svg style="left:4935px;top:1840px;width:50px;height:80px;" viewBox="0 0 10 16"><path d="M8.8 1 L1.2 15" stroke="#2e2e2e" stroke-width="1.7"/></svg>
<div style="left:5026px;top:1838px;width:89px;height:83px;background:#f7f8f9;border:9px solid #2a2a2a"></div>
<div style="left:4887.5px;top:5601px;width:560px;height:5px;background:#dde2e5;"></div>
<svg style="left:5142px;top:5646px;width:54px;height:32px;" viewBox="0 0 12 7"><path d="M1 1 L6 6 L11 1" fill="none" stroke="#333" stroke-width="1.9"/></svg>
<div style="left:5770px;top:1120px;width:495px;height:110px;background:#f3d5d8;"></div>
<span class="t" style="top:1122.1px;font-size:36.5px;line-height:36.5px;color:#2b2b2b;font-family:'Liberation Sans',sans-serif;letter-spacing:0px;left:5775px;-webkit-text-stroke:0.7px #2b2b2b;">Mustermann &amp; Söhne GmbH - Adlerflychtstraße 13 - 60318 Frankfurt</span>
<span class="t" style="top:1168.6px;font-size:60.8px;line-height:60.8px;color:#2b2b2b;font-family:'Liberation Sans',sans-serif;letter-spacing:0px;left:5775px;-webkit-text-stroke:0.7px #2b2b2b;">Herrn Franz Arber</span>
<span class="t" style="top:1236.6px;font-size:60.8px;line-height:60.8px;color:#2b2b2b;font-family:'Liberation Sans',sans-serif;letter-spacing:0px;left:5775px;-webkit-text-stroke:0.7px #2b2b2b;">Großhändler</span>
<span class="t" style="top:1306.6px;font-size:60.8px;line-height:60.8px;color:#2b2b2b;font-family:'Liberation Sans',sans-serif;letter-spacing:0px;left:5775px;-webkit-text-stroke:0.7px #2b2b2b;">z.H. Herr Meier</span>
<span class="t" style="top:1376.6px;font-size:60.8px;line-height:60.8px;color:#2b2b2b;font-family:'Liberation Sans',sans-serif;letter-spacing:0px;left:5775px;-webkit-text-stroke:0.7px #2b2b2b;">Wagnergasse 3</span>
<span class="t" style="top:1446.6px;font-size:60.8px;line-height:60.8px;color:#2b2b2b;font-family:'Liberation Sans',sans-serif;letter-spacing:0px;left:5775px;-webkit-text-stroke:0.7px #2b2b2b;">82064 Sauerlach</span>
<div style="left:7785px;top:980px;width:1083px;height:613px;background:#fafafa;border:5.5px solid #b9b9b9"></div>
<div style="left:7788px;top:983px;width:1077px;height:111px;background:#d7d7d7;"></div>
<div style="left:7970px;top:1002px;width:714px;height:73px;background:#bfc3e2;"></div>
<span class="t" style="top:998.3px;font-size:72.9px;line-height:72.9px;color:#1e1e52;font-weight:700;font-family:'Liberation Sans',sans-serif;letter-spacing:0px;left:7327px;width:2000px;text-align:center;-webkit-text-stroke:0.7px #1e1e52;">Auftragsbestätigung</span>
<div style="left:8290px;top:1202px;width:268px;height:51px;background:#f3d5d8;"></div>
<div style="left:8290px;top:1275px;width:252px;height:48px;background:#f7dc8c;"></div>
<span class="t" style="top:1129px;font-size:48.5px;line-height:48.5px;color:#2b2b2b;font-family:'Liberation Sans',sans-serif;letter-spacing:0px;left:7828px;-webkit-text-stroke:0.7px #2b2b2b;">Vorgangsnummer</span>
<span class="t" style="top:1129px;font-size:48.5px;line-height:48.5px;color:#2b2b2b;font-family:'Liberation Sans',sans-serif;letter-spacing:0px;left:8293px;-webkit-text-stroke:0.7px #2b2b2b;">884</span>
<span class="t" style="top:1200px;font-size:48.5px;line-height:48.5px;color:#2b2b2b;font-family:'Liberation Sans',sans-serif;letter-spacing:0px;left:7828px;-webkit-text-stroke:0.7px #2b2b2b;">Belegnummer</span>
<span class="t" style="top:1200px;font-size:48.5px;line-height:48.5px;color:#2b2b2b;font-family:'Liberation Sans',sans-serif;letter-spacing:0px;left:8293px;-webkit-text-stroke:0.7px #2b2b2b;">2022-60001</span>
<span class="t" style="top:1273px;font-size:48.5px;line-height:48.5px;color:#2b2b2b;font-family:'Liberation Sans',sans-serif;letter-spacing:0px;left:7828px;-webkit-text-stroke:0.7px #2b2b2b;">Datum</span>
<span class="t" style="top:1273px;font-size:48.5px;line-height:48.5px;color:#2b2b2b;font-family:'Liberation Sans',sans-serif;letter-spacing:0px;left:8293px;-webkit-text-stroke:0.7px #2b2b2b;">29.09.2022</span>
<span class="t" style="top:1344px;font-size:48.5px;line-height:48.5px;color:#2b2b2b;font-family:'Liberation Sans',sans-serif;letter-spacing:0px;left:7828px;-webkit-text-stroke:0.7px #2b2b2b;">Kundennummer</span>
<span class="t" style="top:1344px;font-size:48.5px;line-height:48.5px;color:#2b2b2b;font-family:'Liberation Sans',sans-serif;letter-spacing:0px;left:8293px;-webkit-text-stroke:0.7px #2b2b2b;">D100000</span>
<span class="t" style="top:1415px;font-size:48.5px;line-height:48.5px;color:#2b2b2b;font-family:'Liberation Sans',sans-serif;letter-spacing:0px;left:7828px;-webkit-text-stroke:0.7px #2b2b2b;">Bearbeiter</span>
<span class="t" style="top:1415px;font-size:48.5px;line-height:48.5px;color:#2b2b2b;font-family:'Liberation Sans',sans-serif;letter-spacing:0px;left:8293px;-webkit-text-stroke:0.7px #2b2b2b;">Sage</span>
<span class="t" style="top:1533.9px;font-size:42.7px;line-height:42.7px;color:#2b2b2b;font-family:'Liberation Sans',sans-serif;letter-spacing:0px;left:7326px;width:2000px;text-align:center;-webkit-text-stroke:0.7px #2b2b2b;">Bitte bei allen Rückfragen angeben !</span>
<div style="left:5770px;top:2022px;width:3098px;height:363px;background:#fafafa;border:5.5px solid #b9b9b9"></div>
<div style="left:6170px;top:2245px;width:208px;height:50px;background:#f3d5d8;"></div>
<div style="left:7678px;top:2032px;width:320px;height:49px;background:#fbeecb;"></div>
<span class="t" style="top:2033px;font-size:48.5px;line-height:48.5px;color:#2b2b2b;font-family:'Liberation Sans',sans-serif;letter-spacing:0px;left:5790px;-webkit-text-stroke:0.7px #2b2b2b;">Versandart</span>
<span class="t" style="top:2033px;font-size:48.5px;line-height:48.5px;color:#2b2b2b;font-family:'Liberation Sans',sans-serif;letter-spacing:0px;left:6173px;-webkit-text-stroke:0.7px #2b2b2b;">Deutsche Post</span>
<span class="t" style="top:2033px;font-size:48.5px;line-height:48.5px;color:#2b2b2b;font-family:'Liberation Sans',sans-serif;letter-spacing:0px;left:7288px;-webkit-text-stroke:0.7px #2b2b2b;">Unsere UStIDNr</span>
<span class="t" style="top:2033px;font-size:48.5px;line-height:48.5px;color:#b39a5a;font-family:'Liberation Sans',sans-serif;letter-spacing:0px;left:7680px;-webkit-text-stroke:0.7px #b39a5a;">DE812398837</span>
<span class="t" style="top:2103px;font-size:48.5px;line-height:48.5px;color:#2b2b2b;font-family:'Liberation Sans',sans-serif;letter-spacing:0px;left:5790px;-webkit-text-stroke:0.7px #2b2b2b;">Lieferbedingung</span>
<span class="t" style="top:2103px;font-size:48.5px;line-height:48.5px;color:#2b2b2b;font-family:'Liberation Sans',sans-serif;letter-spacing:0px;left:6173px;-webkit-text-stroke:0.7px #2b2b2b;">normales Paket</span>
<span class="t" style="top:2103px;font-size:48.5px;line-height:48.5px;color:#2b2b2b;font-family:'Liberation Sans',sans-serif;letter-spacing:0px;left:7288px;-webkit-text-stroke:0.7px #2b2b2b;">Unsere SteuerNr</span>
<span class="t" style="top:2103px;font-size:48.5px;line-height:48.5px;color:#2b2b2b;font-family:'Liberation Sans',sans-serif;letter-spacing:0px;left:7680px;-webkit-text-stroke:0.7px #2b2b2b;">23 562 65834</span>
<span class="t" style="top:2175px;font-size:48.5px;line-height:48.5px;color:#2b2b2b;font-family:'Liberation Sans',sans-serif;letter-spacing:0px;left:5790px;-webkit-text-stroke:0.7px #2b2b2b;">Bezug</span>
<span class="t" style="top:2175px;font-size:48.5px;line-height:48.5px;color:#2b2b2b;font-family:'Liberation Sans',sans-serif;letter-spacing:0px;left:7288px;-webkit-text-stroke:0.7px #2b2b2b;">Ausländ. StNr</span>
<span class="t" style="top:2247px;font-size:48.5px;line-height:48.5px;color:#2b2b2b;font-family:'Liberation Sans',sans-serif;letter-spacing:0px;left:5790px;-webkit-text-stroke:0.7px #2b2b2b;">Ihr Zeichen</span>
<span class="t" style="top:2247px;font-size:48.5px;line-height:48.5px;color:#2b2b2b;font-family:'Liberation Sans',sans-serif;letter-spacing:0px;left:6173px;-webkit-text-stroke:0.7px #2b2b2b;">599 / 766</span>
<span class="t" style="top:2247px;font-size:48.5px;line-height:48.5px;color:#2b2b2b;font-family:'Liberation Sans',sans-serif;letter-spacing:0px;left:7288px;-webkit-text-stroke:0.7px #2b2b2b;">Ihre UStIDNr</span>
<span class="t" style="top:2318px;font-size:48.5px;line-height:48.5px;color:#2b2b2b;font-family:'Liberation Sans',sans-serif;letter-spacing:0px;left:5790px;-webkit-text-stroke:0.7px #2b2b2b;">Ihr Beleg</span>
<span class="t" style="top:2425px;font-size:48.5px;line-height:48.5px;color:#2b2b2b;font-family:'Liberation Sans',sans-serif;letter-spacing:0px;left:5775px;-webkit-text-stroke:0.7px #2b2b2b;">Sehr geehrter Herr Meier,</span>
<span class="t" style="top:2482px;font-size:48.5px;line-height:48.5px;color:#2b2b2b;font-family:'Liberation Sans',sans-serif;letter-spacing:0px;left:5775px;-webkit-text-stroke:0.7px #2b2b2b;">wir erlauben uns hiermit, Ihnen folgende Auftragspositionen schriftlich zu bestätigen. Sollten Sie weitere Fragen haben, stehen wir Ihnen</span>
<span class="t" style="top:2537px;font-size:48.5px;line-height:48.5px;color:#2b2b2b;font-family:'Liberation Sans',sans-serif;letter-spacing:0px;left:5775px;-webkit-text-stroke:0.7px #2b2b2b;">selbstverständlich jederzeit zur Verfügung.</span>
<span class="t" style="top:2706px;font-size:48.5px;line-height:48.5px;color:#2b2b2b;font-family:'Liberation Sans',sans-serif;letter-spacing:0px;left:5775px;-webkit-text-stroke:0.7px #2b2b2b;">LIEFERUNG WIE IMMER!</span>
<div style="left:5770px;top:2850px;width:3095px;height:66px;background:#d9d9d9;"></div>
<span class="t" style="top:2857px;font-size:48.5px;line-height:48.5px;color:#2b2b2b;font-family:'Liberation Sans',sans-serif;letter-spacing:0px;left:5780px;-webkit-text-stroke:0.7px #2b2b2b;">Pos.</span>
<span class="t" style="top:2857px;font-size:48.5px;line-height:48.5px;color:#2b2b2b;font-family:'Liberation Sans',sans-serif;letter-spacing:0px;left:5955px;-webkit-text-stroke:0.7px #2b2b2b;">Artikelnr.</span>
<span class="t" style="top:2857px;font-size:48.5px;line-height:48.5px;color:#2b2b2b;font-family:'Liberation Sans',sans-serif;letter-spacing:0px;left:6245px;-webkit-text-stroke:0.7px #2b2b2b;">Bezeichnung</span>
<span class="t" style="top:2857px;font-size:48.5px;line-height:48.5px;color:#2b2b2b;font-family:'Liberation Sans',sans-serif;letter-spacing:0px;left:7218px;-webkit-text-stroke:0.7px #2b2b2b;">Termin</span>
<span class="t" style="top:2857px;font-size:48.5px;line-height:48.5px;color:#2b2b2b;font-family:'Liberation Sans',sans-serif;letter-spacing:0px;right:2418px;-webkit-text-stroke:0.7px #2b2b2b;">Menge ME</span>
<span class="t" style="top:2857px;font-size:48.5px;line-height:48.5px;color:#2b2b2b;font-family:'Liberation Sans',sans-serif;letter-spacing:0px;right:1922px;-webkit-text-stroke:0.7px #2b2b2b;">Einzelpreis</span>
<span class="t" style="top:2857px;font-size:48.5px;line-height:48.5px;color:#2b2b2b;font-family:'Liberation Sans',sans-serif;letter-spacing:0px;right:1490px;-webkit-text-stroke:0.7px #2b2b2b;">Gesamtpreis</span>
<span class="t" style="top:2857px;font-size:48.5px;line-height:48.5px;color:#2b2b2b;font-family:'Liberation Sans',sans-serif;letter-spacing:0px;left:8778px;-webkit-text-stroke:0.7px #2b2b2b;">SC</span>
<span class="t" style="top:2955px;font-size:48.5px;line-height:48.5px;color:#2b2b2b;font-family:'Liberation Sans',sans-serif;letter-spacing:0px;left:5780px;-webkit-text-stroke:0.7px #2b2b2b;">1</span>
<span class="t" style="top:2955px;font-size:48.5px;line-height:48.5px;color:#2b2b2b;font-family:'Liberation Sans',sans-serif;letter-spacing:0px;left:5955px;-webkit-text-stroke:0.7px #2b2b2b;">00200050</span>
<span class="t" style="top:2955px;font-size:48.5px;line-height:48.5px;color:#2b2b2b;font-family:'Liberation Sans',sans-serif;letter-spacing:0px;left:6245px;-webkit-text-stroke:0.7px #2b2b2b;">Deckenfluter Antinea</span>
<span class="t" style="top:2955px;font-size:48.5px;line-height:48.5px;color:#2b2b2b;font-family:'Liberation Sans',sans-serif;letter-spacing:0px;left:7218px;-webkit-text-stroke:0.7px #2b2b2b;">29.09.2022</span>
<span class="t" style="top:2955px;font-size:48.5px;line-height:48.5px;color:#2b2b2b;font-family:'Liberation Sans',sans-serif;letter-spacing:0px;right:2418px;-webkit-text-stroke:0.7px #2b2b2b;">100 Stk</span>
<span class="t" style="top:2955px;font-size:48.5px;line-height:48.5px;color:#2b2b2b;font-family:'Liberation Sans',sans-serif;letter-spacing:0px;right:1922px;-webkit-text-stroke:0.7px #2b2b2b;">204,01</span>
<span class="t" style="top:2955px;font-size:48.5px;line-height:48.5px;color:#2b2b2b;font-family:'Liberation Sans',sans-serif;letter-spacing:0px;right:1490px;-webkit-text-stroke:0.7px #2b2b2b;">20.401,00</span>
<span class="t" style="top:2955px;font-size:48.5px;line-height:48.5px;color:#2b2b2b;font-family:'Liberation Sans',sans-serif;letter-spacing:0px;left:8778px;-webkit-text-stroke:0.7px #2b2b2b;">101</span>
<span class="t" style="top:3027px;font-size:48.5px;line-height:48.5px;color:#2b2b2b;font-family:'Liberation Sans',sans-serif;letter-spacing:0px;left:6250px;-webkit-text-stroke:0.7px #2b2b2b;">Farbe: Weiß</span>
<span class="t" style="top:3027px;font-size:48.5px;line-height:48.5px;color:#2b2b2b;font-family:'Liberation Sans',sans-serif;letter-spacing:0px;left:7500px;-webkit-text-stroke:0.7px #2b2b2b;">abzgl.</span>
<span class="t" style="top:3027px;font-size:48.5px;line-height:48.5px;color:#2b2b2b;font-family:'Liberation Sans',sans-serif;letter-spacing:0px;right:2030px;-webkit-text-stroke:0.7px #2b2b2b;">5,00</span>
<span class="t" style="top:3027px;font-size:48.5px;line-height:48.5px;color:#2b2b2b;font-family:'Liberation Sans',sans-serif;letter-spacing:0px;right:1922px;-webkit-text-stroke:0.7px #2b2b2b;">%</span>
<span class="t" style="top:3027px;font-size:48.5px;line-height:48.5px;color:#2b2b2b;font-family:'Liberation Sans',sans-serif;letter-spacing:0px;right:1490px;-webkit-text-stroke:0.7px #2b2b2b;">-1.020,05</span>
<span class="t" style="top:3097px;font-size:48.5px;line-height:48.5px;color:#2b2b2b;font-family:'Liberation Sans',sans-serif;letter-spacing:0px;left:6250px;-webkit-text-stroke:0.7px #2b2b2b;">Ihre Artikelnummer 7567678</span>
<span class="t" style="top:3155px;font-size:48.5px;line-height:48.5px;color:#2b2b2b;font-family:'Liberation Sans',sans-serif;letter-spacing:0px;left:6250px;-webkit-text-stroke:0.7px #2b2b2b;">Höhe 210 cm</span>
<span class="t" style="top:3238.6px;font-size:60.8px;line-height:60.8px;color:#2b2b2b;font-family:'Liberation Sans',sans-serif;font-style:italic;letter-spacing:0px;left:6255px;-webkit-text-stroke:0.7px #2b2b2b;">Stehleuchte wunderbar,</span>
<span class="t" style="top:3251.1px;font-size:46px;line-height:46px;color:#2b2b2b;font-family:'Liberation Sans',sans-serif;letter-spacing:0px;left:6906px;-webkit-text-stroke:0.7px #2b2b2b;">energiesparend</span>
<div style="left:5770px;top:3320px;width:3095px;height:71px;background:#d9d9d9;"></div>
<div style="left:5770px;top:3464px;width:2985px;height:71px;background:#d9d9d9;"></div>
<div style="left:8325px;top:3318px;width:432px;height:78px;background:#fdfdfd;border:5px solid #a9a9a9;border-radius:12px"></div>
<div style="left:8325px;top:3462px;width:432px;height:76px;background:#fdfdfd;border:5px solid #a9a9a9;border-radius:12px"></div>
<span class="t" style="top:3333px;font-size:48.5px;line-height:48.5px;color:#2b2b2b;font-family:'Liberation Sans',sans-serif;letter-spacing:0px;right:2070px;-webkit-text-stroke:0.7px #2b2b2b;">Zwischensumme</span>
<span class="t" style="top:3333px;font-size:48.5px;line-height:48.5px;color:#2b2b2b;font-family:'Liberation Sans',sans-serif;letter-spacing:0px;left:8220px;-webkit-text-stroke:0.7px #2b2b2b;">EUR</span>
<span class="t" style="top:3333px;font-size:48.5px;line-height:48.5px;color:#2b2b2b;font-family:'Liberation Sans',sans-serif;letter-spacing:0px;right:1494px;-webkit-text-stroke:0.7px #2b2b2b;">19.380,95</span>
<span class="t" style="top:3333px;font-size:48.5px;line-height:48.5px;color:#2b2b2b;font-family:'Liberation Sans',sans-serif;letter-spacing:0px;left:8778px;-webkit-text-stroke:0.7px #2b2b2b;">SC</span>
<div style="left:7590px;top:3405px;width:120px;height:49px;background:#f3d5d8;"></div>
<div style="left:8106px;top:3405px;width:218px;height:49px;background:#fcecc0;"></div>
<div style="left:8560px;top:3405px;width:192px;height:49px;background:#fcecc0;"></div>
<span class="t" style="top:3403px;font-size:48.5px;line-height:48.5px;color:#2b2b2b;font-family:'Liberation Sans',sans-serif;letter-spacing:0px;left:6598px;-webkit-text-stroke:0.7px #2b2b2b;">incl. MwSt. mit Steuercode</span>
<span class="t" style="top:3403px;font-size:48.5px;line-height:48.5px;color:#2b2b2b;font-family:'Liberation Sans',sans-serif;letter-spacing:0px;left:7403px;-webkit-text-stroke:0.7px #2b2b2b;">101</span>
<span class="t" style="top:3403px;font-size:48.5px;line-height:48.5px;color:#7a3a42;font-family:'Liberation Sans',sans-serif;letter-spacing:0px;left:7593px;-webkit-text-stroke:0.7px #7a3a42;">19,00</span>
<span class="t" style="top:3403px;font-size:48.5px;line-height:48.5px;color:#2b2b2b;font-family:'Liberation Sans',sans-serif;letter-spacing:0px;left:7832px;-webkit-text-stroke:0.7px #2b2b2b;">% von</span>
<span class="t" style="top:3403px;font-size:48.5px;line-height:48.5px;color:#8c7a42;font-family:'Liberation Sans',sans-serif;letter-spacing:0px;right:1920px;-webkit-text-stroke:0.7px #8c7a42;">16.286,51</span>
<span class="t" style="top:3403px;font-size:48.5px;line-height:48.5px;color:#8c7a42;font-family:'Liberation Sans',sans-serif;letter-spacing:0px;right:1492px;-webkit-text-stroke:0.7px #8c7a42;">3.094,44</span>
<div style="left:8216px;top:3474px;width:102px;height:52px;background:#e9d9a2;"></div>
<div style="left:8526px;top:3475px;width:224px;height:49px;background:#fcecc0;"></div>
<span class="t" style="top:3475px;font-size:48.5px;line-height:48.5px;color:#2b2b2b;font-family:'Liberation Sans',sans-serif;letter-spacing:0px;right:2070px;-webkit-text-stroke:0.7px #2b2b2b;">Endsumme</span>
<span class="t" style="top:3475px;font-size:48.5px;line-height:48.5px;color:#2b2b2b;font-family:'Liberation Sans',sans-serif;letter-spacing:0px;left:8220px;-webkit-text-stroke:0.7px #2b2b2b;">EUR</span>
<span class="t" style="top:3475px;font-size:48.5px;line-height:48.5px;color:#8c7a42;font-family:'Liberation Sans',sans-serif;letter-spacing:0px;right:1494px;-webkit-text-stroke:0.7px #8c7a42;">19.380,95</span>
<span class="t" style="top:3584px;font-size:48.5px;line-height:48.5px;color:#2b2b2b;font-family:'Liberation Sans',sans-serif;letter-spacing:0px;left:5775px;-webkit-text-stroke:0.7px #2b2b2b;">Für weitere Fragen stehen wir Ihnen jederzeit zur Verfügung.</span>
<span class="t" style="top:3681px;font-size:48.5px;line-height:48.5px;color:#2b2b2b;font-weight:700;font-family:'Liberation Sans',sans-serif;font-style:italic;letter-spacing:0px;left:5775px;text-decoration:underline;-webkit-text-stroke:0.7px #2b2b2b;">Zahlungsvereinbarungen:</span>
<span class="t" style="top:3754px;font-size:48.5px;line-height:48.5px;color:#2b2b2b;font-family:'Liberation Sans',sans-serif;letter-spacing:0px;left:5775px;-webkit-text-stroke:0.7px #2b2b2b;">Zahlung erfolgt durch</span>
<span class="t" style="top:3754px;font-size:48.5px;line-height:48.5px;color:#2b2b2b;font-family:'Liberation Sans',sans-serif;letter-spacing:0px;left:6458px;-webkit-text-stroke:0.7px #2b2b2b;">Einzugsermächtigung des Kunden</span>
</div></body></html>
